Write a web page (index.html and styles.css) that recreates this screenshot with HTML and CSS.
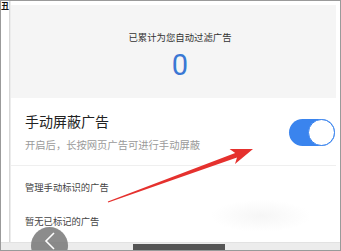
FILE: index.html
```html
<!DOCTYPE html>
<html lang="zh-CN">
<head>
  <meta charset="UTF-8">
  <meta name="viewport" content="width=device-width, initial-scale=1.0">
  <title>广告过滤</title>
  <link rel="stylesheet" href="styles.css">
</head>
<body>
  <div class="frame">
    <div class="body-row">
      <div class="side"><span class="side-mark">丑</span></div>
      <div class="main">
        <div class="summary">
          <p class="summary-label">已累计为您自动过滤广告</p>
          <p class="summary-count">0</p>
        </div>

        <div class="switch-row">
          <div class="switch-text">
            <h3>手动屏蔽广告</h3>
            <p>开启后，长按网页广告可进行手动屏蔽</p>
          </div>
          <div class="toggle on"><span class="knob"></span></div>
        </div>

        <div class="list">
          <p class="list-title">管理手动标识的广告</p>
          <p class="list-empty">暂无已标记的广告</p>
        </div>
      </div>
    </div>
    <div class="bottom-bar"><span class="scroll-thumb"></span></div>

    <div class="back-btn">
      <svg width="14" height="18" viewBox="0 0 14 18"><path d="M11 1 L3 9 L11 17" fill="none" stroke="#fff" stroke-width="1.6"/></svg>
    </div>

    <svg class="arrow" width="341" height="251" viewBox="0 0 341 251">
      <polygon points="107.8,201.5 235.2,152.9 229.6,149 253,149 235,164 237,157.5 108.2,202.5" fill="#e5312e"/>
    </svg>
  </div>
</body>
</html>
```

FILE: styles.css
```css
body {
  margin: 0;
  padding: 0;
  background-color: #fff;
  font-family: "Noto Sans CJK SC", "Noto Sans", sans-serif;
}
p, h3 {
  margin: 0;
}
.frame {
  position: relative;
  width: 341px;
  height: 251px;
  box-sizing: border-box;
  border: 1px solid #9a9a9a;
  display: flex;
  flex-direction: column;
  overflow: hidden;
  background-color: #fff;
}
.body-row {
  flex: 1;
  display: flex;
  min-height: 0;
}
.side {
  width: 8px;
  border-right: 1px solid #d8d8d8;
  position: relative;
}
.side-mark {
  position: absolute;
  left: 0;
  top: 0;
  font-size: 8px;
  line-height: 10px;
  font-weight: bold;
  color: #111;
}
.main {
  flex: 1;
  padding: 4px 4px 0 0;
  display: flex;
  flex-direction: column;
  border-left: 1px solid #ececec;
}
.summary {
  background-color: #f5f5f5;
  height: 93px;
  box-sizing: border-box;
  padding: 26px 0 0 13px;
  text-align: center;
}
.summary-label {
  font-size: 9.4px;
  line-height: 12px;
  color: #333;
}
.summary-count {
  margin-top: 7px;
  font-family: Roboto, "Noto Sans", sans-serif;
  font-weight: 400;
  font-size: 29px;
  line-height: 30px;
  color: #3a78d4;
}
.switch-row {
  display: flex;
  align-items: center;
  justify-content: space-between;
  padding: 15px 1px 14px 14px;
  border-bottom: 1px solid #efefef;
}
.switch-text h3 {
  font-size: 14px;
  line-height: 16px;
  font-weight: normal;
  color: #222;
}
.switch-text p {
  margin-top: 10px;
  font-size: 10.3px;
  line-height: 12px;
  color: #9a9a9a;
}
.toggle {
  width: 46px;
  height: 27px;
  border-radius: 14px;
  background-color: #3a84ee;
  position: relative;
}
.toggle .knob {
  position: absolute;
  right: 0;
  top: 0;
  width: 25px;
  height: 25px;
  border-radius: 50%;
  background-color: #fff;
  border: 1px solid #3a84ee;
}
.list {
  flex: 1;
  padding: 15px 0 0 14px;
  background: radial-gradient(ellipse 50px 16px at 250px 50px, #f6f6f6, rgba(255,255,255,0));
}
.list p {
  font-size: 9.3px;
  line-height: 12px;
  color: #444;
}
.list .list-empty {
  margin-top: 22px;
}
.bottom-bar {
  height: 7px;
  background-color: #ececec;
  border-top: 1px solid #e2e2e2;
  position: relative;
}
.scroll-thumb {
  position: absolute;
  left: 132px;
  top: 1px;
  width: 92px;
  height: 6px;
  background-color: #555;
}
.back-btn {
  position: absolute;
  left: 30px;
  top: 226px;
  width: 37px;
  height: 37px;
  border-radius: 50%;
  background-color: rgba(120, 120, 120, 0.85);
  display: flex;
  justify-content: center;
  padding-top: 5px;
  box-sizing: border-box;
}
.arrow {
  position: absolute;
  left: -1px;
  top: -1px;
}
```
